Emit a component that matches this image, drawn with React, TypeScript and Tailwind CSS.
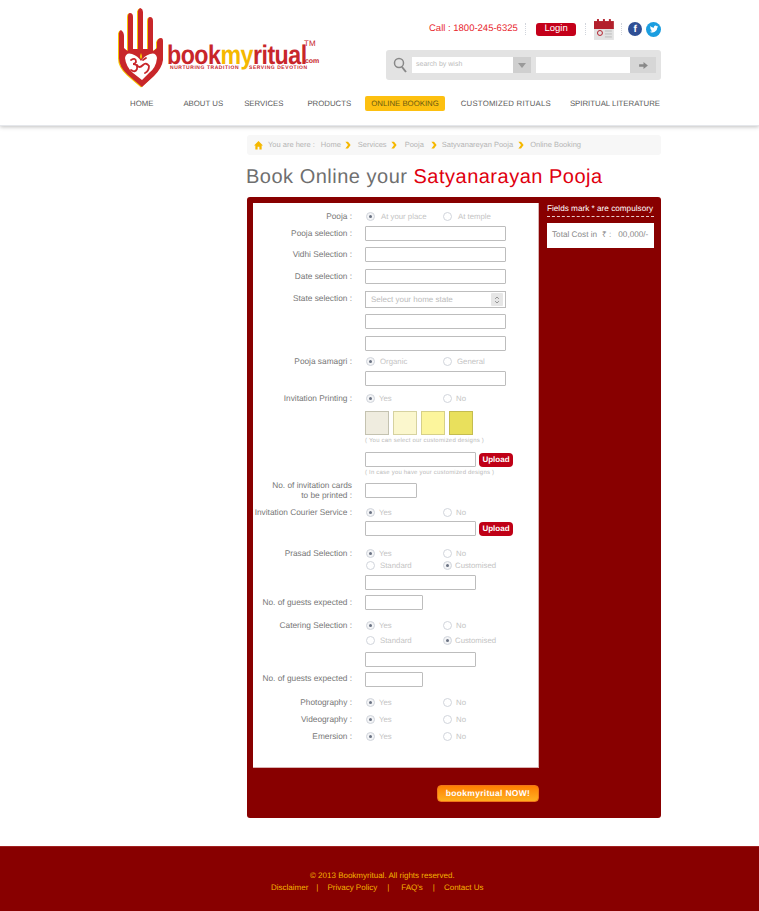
import React from 'react';

const Radio = ({ on, label, gap = 'ml-[4px]' }: { on?: boolean; label: string; gap?: string }) => (
  <div className="flex items-center h-[10px] w-[77px]">
    <span className={`w-[9px] h-[9px] rounded-full border border-gray-300 flex items-center justify-center ${on ? 'bg-gray-100' : 'bg-white'}`}>
      {on && <span className="w-[3px] h-[3px] rounded-full bg-gray-500" />}
    </span>
    <span className={`${gap} mt-[2px] text-[7.8px] leading-[10px] text-[#c4c4c4] whitespace-nowrap`}>{label}</span>
  </div>
);

const Input = ({ w = 'w-[141px]', h = 'h-[15px]' }: { w?: string; h?: string }) => (
  <div className={`${w} ${h} bg-white border border-[#bdbdbd] rounded-[1px]`} />
);

const Upload = () => (
  <div className="ml-[3px] w-[34px] h-[14px] rounded-[4px] bg-[#bf0016] text-white text-[8px] leading-[10px] font-bold flex items-center justify-center">Upload</div>
);

// label column ends at x=352, fields start at x=365
const Row = ({ label, lift = '', className = '', children }: { label?: React.ReactNode; lift?: string; className?: string; children?: React.ReactNode }) => (
  <div className={`flex items-center ${className}`}>
    <div className={`w-[99px] shrink-0 text-right text-[8.3px] leading-[10px] text-[#777] whitespace-nowrap ${lift}`}>{label}</div>
    <div className="ml-[13px] flex items-center">{children}</div>
  </div>
);

const RadioRow = ({ label, className = '', children }: { label?: React.ReactNode; className?: string; children?: React.ReactNode }) => (
  <Row label={label} className={className}>
    <div className="ml-[1px] flex">{children}</div>
  </Row>
);

const Chevron = ({ className }: { className: string }) => (
  <svg viewBox="0 0 8 10" className={`w-[6px] h-[8px] shrink-0 ${className}`}>
    <path d="M0.500 0.500 L4 0.500 L7.500 5 L4 9.500 L0.500 9.500 L4 5 Z" fill="#f5b800" />
  </svg>
);

const Divider = () => <span className="block h-[12px] border-l border-dotted border-gray-300" />;

const Logo = () => (
  <div className="flex items-start w-[205px] h-[82px]">
    <svg viewBox="0 0 46 80" className="w-[46px] h-[80px] shrink-0">
      <g transform="translate(-1 0.5)">
        <path d="M1 25 Q2 22 3 22 Q6 24 6 28 L6 40 Q8 42 10 43 L10 9 Q10 5 12 5 Q15 5 15 9 L15 41 L20 41 L20 3 Q21 0 22.500 0 Q25 1 25 4 L25 41 L30 41 L30 13 Q30 9 32 9 Q35 9 35 13 L35 43 Q37 42 39 40 L39 34 Q40 30 43 30 Q45 30 45 33 L45 52 Q44 60 36 68 L24 79 L10 67 Q1 59 1 50 Z" fill="#f5c400" />
      </g>
      <path d="M1 25 Q2 22 3 22 Q6 24 6 28 L6 40 Q8 42 10 43 L10 9 Q10 5 12 5 Q15 5 15 9 L15 41 L20 41 L20 3 Q21 0 22.500 0 Q25 1 25 4 L25 41 L30 41 L30 13 Q30 9 32 9 Q35 9 35 13 L35 43 Q37 42 39 40 L39 34 Q40 30 43 30 Q45 30 45 33 L45 52 Q44 60 36 68 L24 79 L10 67 Q1 59 1 50 Z" fill="#c8262a" />
      <path d="M7 50 Q8 44 14 46 Q20 48 23 53 Q26 48 32 46 Q38 44 39 50 Q38 60 31 65 L24 72 L15 65 Q8 59 7 50Z" fill="#fff" />
      <path d="M13 52 Q18 49 18 54 Q17 56 15 56 Q20 56 19 61 Q17 65 13 62 M19 57 Q21 61 25 57 Q28 54 31 58 Q31 63 27 65 M25 52 L28 50" fill="none" stroke="#c8262a" strokeWidth="1.800" strokeLinecap="round" />
      <path d="M23 45 Q21 49 23 51 Q25 49 23 45Z" fill="#f5c400" />
    </svg>
    <div className="ml-[3px] mt-[36px] relative">
      <div className="font-bold text-[27px] leading-[22px] tracking-[-0.6px] origin-left scale-x-[0.86] whitespace-nowrap text-[#c8262a]">
        book<span className="text-[#f5b800]">my</span>ritual
      </div>
      <div className="pl-[3px] flex font-bold text-[5px] leading-[5px] tracking-[0.55px] text-[#c8262a] whitespace-nowrap">
        <span className="w-[79px]">NURTURING TRADITION</span>
        <span>SERVING DEVOTION</span>
      </div>
      <span className="absolute left-[137px] top-[-4px] text-[8px] leading-[8px] text-[#c8262a]">TM</span>
      <span className="absolute left-[136px] top-[14px] text-[7px] leading-[8px] font-bold text-[#c8262a]">.com</span>
    </div>
  </div>
);

const nav = [
  { t: 'HOME', c: 'ml-[12px]' },
  { t: 'ABOUT US', c: 'ml-[30px]' },
  { t: 'SERVICES', c: 'ml-[21px]' },
  { t: 'PRODUCTS', c: 'ml-[24px]' },
  { t: 'ONLINE BOOKING', c: 'ml-[14px] bg-[#fdc010] rounded-[2px] px-[6px] h-[15px] flex items-center text-[#6b5a10]' },
  { t: 'CUSTOMIZED RITUALS', c: 'ml-[16px] tracking-[0.2px]' },
  { t: 'SPIRITUAL LITERATURE', c: 'ml-[19px]' },
];

export default function App() {
  return (
    <div className="w-[759px] min-h-[911px] bg-white font-['Liberation_Sans',Arial,sans-serif] [text-rendering:geometricPrecision]">
      <header className="h-[126px] pl-[118px] pt-[8px] shadow-[0_1px_4px_rgba(0,0,0,0.25)] border-b border-gray-200">
        <div className="flex h-[88px]">
          <Logo />
          <div className="ml-[63px] w-[275px]">
            <div className="flex items-center h-[32px] mt-[5px] pl-[43px]">
              <span className="text-[9.500px] text-[#e8262d] whitespace-nowrap">Call : 1800-245-6325</span>
              <span className="ml-[7px]"><Divider /></span>
              <div className="ml-[10px] w-[41px] h-[13px] rounded-[3px] bg-[#c4001a] text-white text-[9.500px] flex items-center justify-center">Login</div>
              <span className="ml-[9px]"><Divider /></span>
              <svg viewBox="0 0 20 21" className="ml-[8px] w-[20px] h-[21px]">
                <rect x="0" y="9" width="20" height="12" fill="#e2e2e2" />
                <rect x="0" y="2" width="20" height="8" fill="#b3202c" />
                <rect x="3" y="0" width="2" height="4" fill="#b3202c" />
                <rect x="9" y="0" width="2" height="4" fill="#b3202c" />
                <rect x="15" y="0" width="2" height="4" fill="#b3202c" />
                <circle cx="6" cy="14" r="2.500" fill="none" stroke="#b3202c" strokeWidth="1" />
                <path d="M11 12H18M11 15H18M11 18H18" stroke="#bbb" strokeWidth="1" />
              </svg>
              <span className="ml-[7px]"><Divider /></span>
              <span className="ml-[6px] w-[14px] h-[14px] rounded-full bg-[#2f4f95] text-white text-[10px] font-bold flex items-center justify-center">f</span>
              <span className="ml-[4px] w-[15px] h-[15px] rounded-full bg-[#1b9ee0] flex items-center justify-center">
                <svg viewBox="0 0 24 24" className="w-[10px] h-[10px]" fill="#fff">
                  <path d="M22 5.900c-.7.3-1.500.5-2.400.6.900-.5 1.500-1.300 1.800-2.300-.8.5-1.700.8-2.600 1a4.100 4.100 0 0 0-7 3.700C8.400 8.700 5.400 7.100 3.400 4.600a4.100 4.100 0 0 0 1.300 5.500c-.7 0-1.300-.2-1.900-.5 0 2 1.400 3.700 3.300 4.100-.6.2-1.200.2-1.900.1.500 1.600 2 2.800 3.800 2.800A8.300 8.300 0 0 1 2 18.300 11.600 11.600 0 0 0 20 8.500c.8-.6 1.500-1.400 2-2.600z" />
                </svg>
              </span>
            </div>
            <div className="mt-[5px] h-[30px] bg-[#e3e3e3] rounded-[3px] flex items-center pl-[7px]">
              <svg viewBox="0 0 14 16" className="w-[14px] h-[16px]" fill="none" stroke="#888" strokeWidth="1.500">
                <circle cx="6" cy="6" r="4.500" />
                <path d="M9 10 L13 15" strokeWidth="2" />
              </svg>
              <div className="ml-[5px] w-[101px] h-[16px] bg-white text-[7px] text-[#bbb] pl-[4px] flex items-center">search by wish</div>
              <div className="w-[18px] h-[16px] bg-[#cfcfcf] flex items-center justify-center">
                <span className="border-x-[4px] border-x-transparent border-t-[5px] border-t-[#999]" />
              </div>
              <div className="ml-[5px] w-[94px] h-[16px] bg-white" />
              <div className="w-[26px] h-[16px] bg-[#d6d6d6] flex items-center justify-center">
                <svg viewBox="0 0 10 8" className="w-[9px] h-[7px]"><path d="M0 2.500H5V0L10 4L5 8V5.500H0Z" fill="#888" /></svg>
              </div>
            </div>
          </div>
        </div>
        <nav className="flex items-center h-[15px] text-[7.8px] text-[#5a5a5a] whitespace-nowrap">
          {nav.map((n) => (
            <span key={n.t} className={n.c}>{n.t}</span>
          ))}
        </nav>
      </header>

      <main className="ml-[247px] w-[414px]">
        <div className="mt-[9px] h-[20px] bg-[#f7f7f7] rounded-[3px] flex items-center pl-[7px] text-[7.500px] text-[#b5b5b5] whitespace-nowrap">
          <svg viewBox="0 0 10 10" className="w-[9px] h-[9px]"><path d="M5 0L10 5H8.500V9.500H6V6.500H4V9.500H1.500V5H0Z" fill="#f5b800" /></svg>
          <span className="ml-[5px]">You are here :</span>
          <span className="ml-[6px]">Home</span>
          <Chevron className="ml-[4px] mr-[7px]" />
          <span>Services</span>
          <Chevron className="ml-[4px] mr-[8px]" />
          <span>Pooja</span>
          <Chevron className="ml-[7px] mr-[5px]" />
          <span>Satyvanareyan Pooja</span>
          <Chevron className="ml-[5px] mr-[6px]" />
          <span>Online Booking</span>
        </div>

        <h1 className="mt-[9px] -ml-[1px] h-[26px] text-[20px] leading-[26px] tracking-[0.5px] text-[#6f6f6f] whitespace-nowrap">
          Book Online your <span className="text-[#e0000f]">Satyanarayan Pooja</span>
        </h1>

        <div className="mt-[7px] h-[621px] bg-[#880000] rounded-[3px] p-[6px]">
          <div className="flex">
            <div className="w-[286px] h-[565px] bg-white border-b border-r border-[#d9b3b3] pt-[8px]">
              <RadioRow label="Pooja :"><Radio on gap="ml-[6px]" label="At your place" /><Radio gap="ml-[6px]" label="At temple" /></RadioRow>
              <Row label="Pooja selection :" lift="mb-[2px]" className="mt-[5px]"><Input /></Row>
              <Row label="Vidhi Selection :" lift="mb-[2px]" className="mt-[6px]"><Input /></Row>
              <Row label="Date selection :" lift="mb-[2px]" className="mt-[7px]"><Input /></Row>
              <Row label="State selection :" lift="mb-[3px]" className="mt-[7px]">
                <div className="w-[141px] h-[17px] bg-white border border-[#bdbdbd] flex items-center pl-[5px] pr-[2px] text-[8px] text-[#bbb]">
                  <span className="flex-1">Select your home state</span>
                  <span className="w-[12px] h-[13px] bg-[#e6e6e6] rounded-[1px] flex items-center justify-center">
                    <svg viewBox="0 0 8 12" className="w-[6px] h-[10px]" fill="none" stroke="#777"><path d="M1.500 4.500L4 2L6.500 4.500M1.500 7.500L4 10L6.500 7.500" /></svg>
                  </span>
                </div>
              </Row>
              <Row className="mt-[6px]"><Input /></Row>
              <Row className="mt-[7px]"><Input /></Row>
              <RadioRow label="Pooja samagri :" className="mt-[5px]"><Radio on gap="ml-[5px]" label="Organic" /><Radio gap="ml-[5px]" label="General" /></RadioRow>
              <Row className="mt-[5px]"><Input /></Row>
              <RadioRow label="Invitation Printing :" className="mt-[7px]"><Radio on label="Yes" /><Radio label="No" /></RadioRow>
              <Row className="mt-[8px]">
                <div className="flex gap-[4px]">
                  <span className="w-[24px] h-[24px] bg-[#efecdf] border border-[#c4c2b0]" />
                  <span className="w-[24px] h-[24px] bg-[#fbf7cd] border border-[#d6d2a0]" />
                  <span className="w-[24px] h-[24px] bg-[#fcf59c] border border-[#d6d088]" />
                  <span className="w-[24px] h-[24px] bg-[#e9e05c] border border-[#c4bc50]" />
                </div>
              </Row>
              <Row className="mt-[1px]"><span className="h-[10px] text-[6px] leading-[10px] text-[#bbb] tracking-[0.2px] whitespace-nowrap">( You can select our customized designs )</span></Row>
              <Row className="mt-[6px]"><Input w="w-[111px]" /><Upload /></Row>
              <Row className="mt-[1px]"><span className="h-[10px] text-[6px] leading-[10px] text-[#bbb] tracking-[0.2px] whitespace-nowrap">( In case you have your customized designs )</span></Row>
              <Row label={<>No. of invitation cards<br />to be printed :</>} className="mt-[2px]"><Input w="w-[52px]" /></Row>
              <RadioRow label="Invitation Courier Service :" className="mt-[7px]"><Radio on label="Yes" /><Radio label="No" /></RadioRow>
              <Row className="mt-[4px]"><Input w="w-[111px]" /><Upload /></Row>
              <RadioRow label="Prasad Selection :" className="mt-[12px]"><Radio on label="Yes" /><Radio label="No" /></RadioRow>
              <RadioRow className="mt-[2px]"><Radio gap="ml-[5px]" label="Standard" /><Radio on gap="ml-[3px]" label="Customised" /></RadioRow>
              <Row className="mt-[5px]"><Input w="w-[111px]" /></Row>
              <Row label="No. of guests expected :" lift="mb-[2px]" className="mt-[5px]"><Input w="w-[58px]" /></Row>
              <RadioRow label="Catering Selection :" className="mt-[10px]"><Radio on label="Yes" /><Radio label="No" /></RadioRow>
              <RadioRow className="mt-[5px]"><Radio gap="ml-[5px]" label="Standard" /><Radio on gap="ml-[3px]" label="Customised" /></RadioRow>
              <Row className="mt-[7px]"><Input w="w-[111px]" /></Row>
              <Row label="No. of guests expected :" lift="mb-[3px]" className="mt-[5px]"><Input w="w-[58px]" /></Row>
              <RadioRow label="Photography :" className="mt-[10px]"><Radio on label="Yes" /><Radio label="No" /></RadioRow>
              <RadioRow label="Videography :" className="mt-[7px]"><Radio on label="Yes" /><Radio label="No" /></RadioRow>
              <RadioRow label="Emersion :" className="mt-[7px]"><Radio on label="Yes" /><Radio label="No" /></RadioRow>
            </div>
            <div className="ml-[8px] w-[107px]">
              <div className="h-[14px] border-b border-dashed border-white/80 text-[8.2px] leading-[11px] text-white whitespace-nowrap">Fields mark * are compulsory</div>
              <div className="mt-[6px] h-[25px] bg-white flex items-center pl-[5px] text-[8.200px] text-[#888] whitespace-nowrap">
                Total Cost in<span className="ml-[5px]">₹ :</span><span className="ml-[7px]">00,000/-</span>
              </div>
            </div>
          </div>
          <div className="mt-[17px] ml-[184px] w-[102px] h-[17px] rounded-[4px] border border-[#f0761a] bg-gradient-to-b from-[#ff7f00] to-[#ffb020] text-white text-[8.500px] font-bold tracking-[0.3px] flex items-center justify-center">bookmyritual NOW!</div>
        </div>
      </main>

      <footer className="mt-[28px] h-[65px] bg-[#880000] border-t border-[#a02020] pt-[23px] text-[8px] leading-[12px] text-[#f5b400]">
        <div className="ml-[310px]">© 2013 Bookmyritual. All rights reserved.</div>
        <div className="ml-[271px] flex whitespace-nowrap">
          <span>Disclaimer</span>
          <span className="ml-[8px]">|</span>
          <span className="ml-[9px]">Privacy Policy</span>
          <span className="ml-[10px]">|</span>
          <span className="ml-[12px]">FAQ's</span>
          <span className="ml-[10px]">|</span>
          <span className="ml-[9px]">Contact Us</span>
        </div>
      </footer>
    </div>
  );
}
